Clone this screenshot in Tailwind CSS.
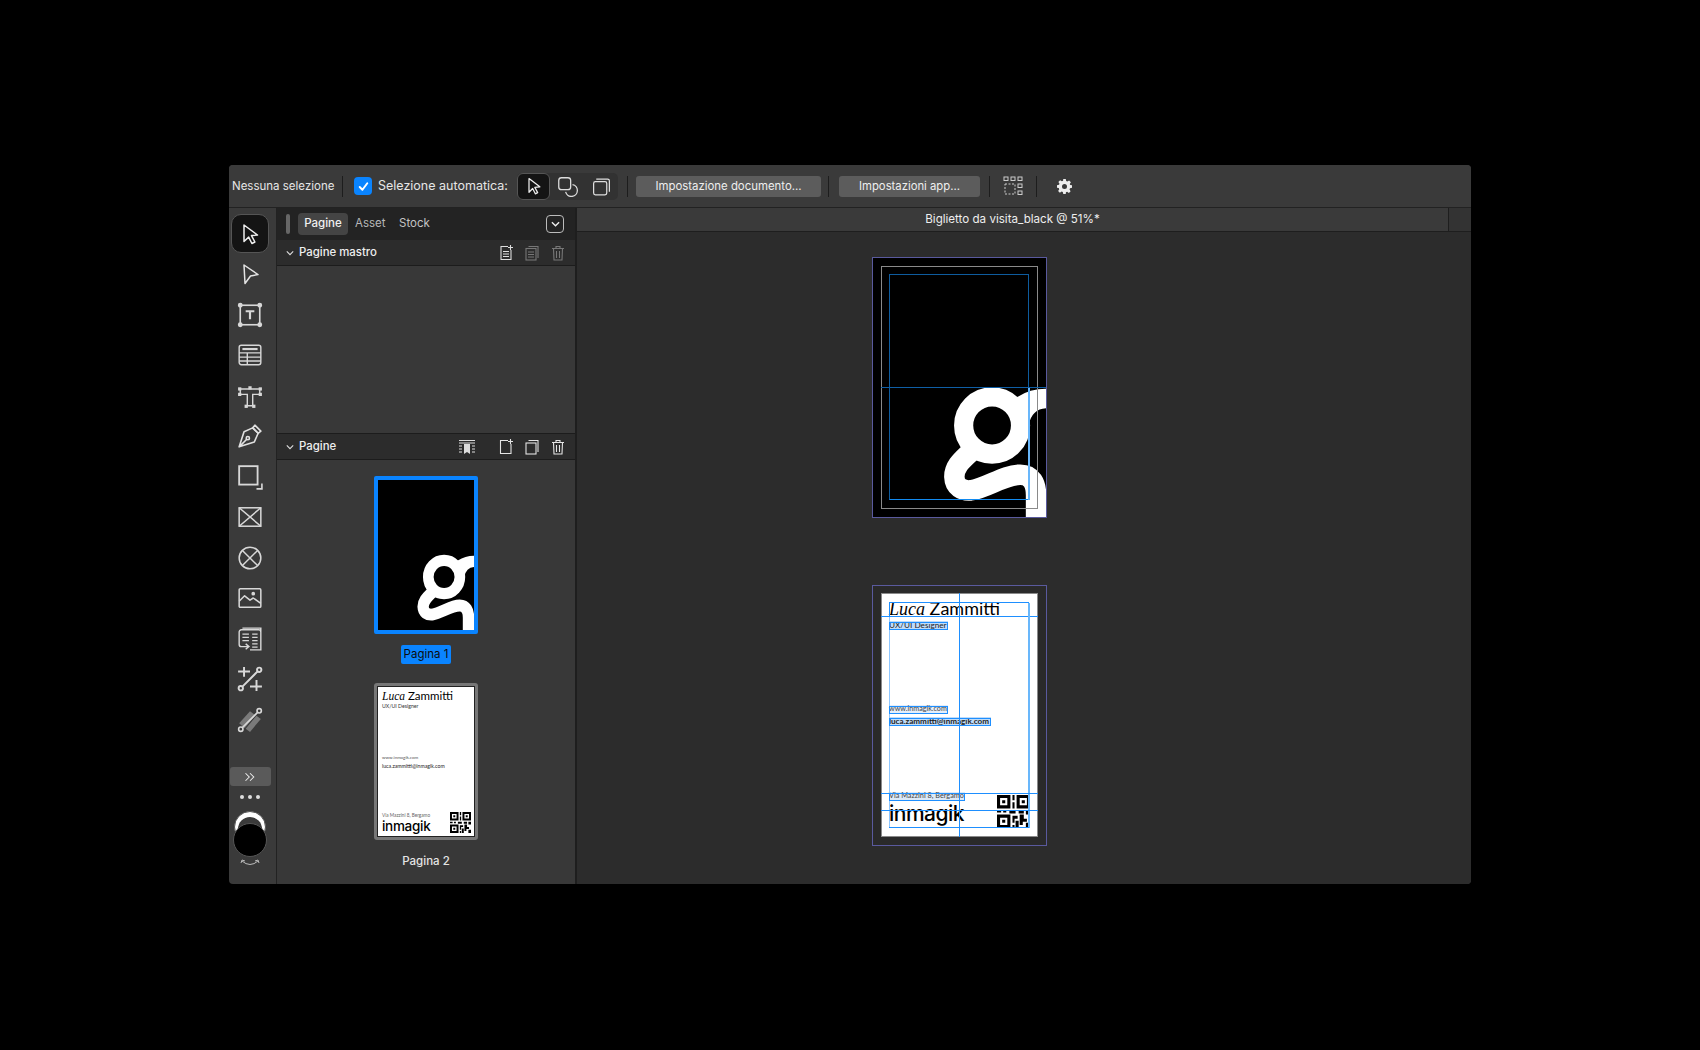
<!DOCTYPE html>
<html lang="it">
<head>
<meta charset="UTF-8">
<title>Biglietto da visita_black</title>
<script src="https://cdn.jsdelivr.net/npm/@tailwindcss/browser@4"></script>
</head>
<body class="bg-black w-[1700px] h-[1050px] overflow-hidden pt-[165px] pl-[229px] font-['Inter','Liberation_Sans',sans-serif] text-[#e6e6e6]">

<svg class="hidden">
  <symbol id="logo-g" viewBox="35 37 523 778" preserveAspectRatio="none">
    <circle cx="395" cy="540" r="86" fill="none" stroke="#fff" stroke-width="58"/>
    <path d="M470 455 Q510 430 558 430 V488 Q515 490 505 540 L470 560 Z" fill="#fff"/>
    <path d="M335 615 C310 640 280 660 281 695 C282 725 305 737 330 735 C380 728 430 688 480 688 C515 688 528 715 528 750 V815" fill="none" stroke="#fff" stroke-width="62"/>
  </symbol>
  <symbol id="qr" viewBox="0 0 32 32">
    <path fill="#000" fill-rule="evenodd" d="M0 0H13V13H0ZM3 3V10H10V3ZM5 5H8V8H5ZM15 0H17V5H15ZM15 7H17V13H15ZM19 0H32V13H19ZM22 3V10H29V3ZM24 5H27V8H24ZM0 15H4V17H0ZM6 15H9V17H6ZM12 15H18V18H12ZM21 15H26V18H21ZM28 15H32V19H28ZM0 19H13V32H0ZM3 22V29H10V22ZM5 24H8V27H5ZM15 20H20V23H17V27H15ZM22 19H26V23H29V26H25V29H22ZM18 25H21V32H18ZM28 27H32V32H28ZM15 29H17V32H15Z"/>
  </symbol>
</svg>

<div class="w-[1242px] h-[719px] rounded-[4px] overflow-hidden bg-[#3a3a3a] flex flex-col">

  <!-- toolbar -->
  <div class="h-[43px] shrink-0 flex items-center bg-[#3a3a3a] border-b border-[#222]">
    <span class="ml-[3px] w-[108px] pt-[1px] text-[11.500px] whitespace-nowrap">Nessuna selezione</span>
    <div class="ml-[2px] w-px h-[21px] bg-[#1d1d1d]"></div>
    <div class="ml-[11px] w-[18px] h-[18px] rounded-[4px] bg-[#0a84ff] flex items-center justify-center">
      <svg viewBox="0 0 12 12" class="w-[13px] h-[13px]" fill="none" stroke="#fff" stroke-width="1.800" stroke-linecap="round" stroke-linejoin="round"><path d="M2.500 6.500 5 9l4.500-6"/></svg>
    </div>
    <span class="ml-[6px] w-[133px] text-[12.500px] whitespace-nowrap">Selezione automatica:</span>
    <div class="ml-[6px] w-[101px] h-[27px] rounded-[5px] bg-[#323232] flex items-center">
      <div class="w-[33px] h-[27px] rounded-[6px] bg-[#141414] border border-[#555] flex items-center justify-center">
        <svg viewBox="0 0 24 24" class="w-[20px] h-[20px]" fill="none" stroke="#eee" stroke-width="1.500" stroke-linejoin="round"><path d="M6 3 19 13l-6 .6 3.400 6.400-2.800 1.400-3.200-6.400L6 19.500Z"/></svg>
      </div>
      <svg viewBox="0 0 24 24" class="ml-[6px] w-[22px] h-[22px]" fill="none" stroke="#ddd" stroke-width="1.400"><rect x="3" y="3" width="13" height="13" rx="3"/><path d="M18 10.500a6.500 6.500 0 1 1-7.500 8"/></svg>
      <svg viewBox="0 0 24 24" class="ml-[13px] w-[21px] h-[21px]" fill="none" stroke="#ddd" stroke-width="1.400"><rect x="3" y="6.500" width="15" height="15" rx="2"/><path d="M6 3.500h13a2 2 0 0 1 2 2V18"/></svg>
    </div>
    <div class="ml-[9px] w-px h-[21px] bg-[#1d1d1d]"></div>
    <div class="ml-[8px] w-[185px] h-[21px] pt-[1px] rounded-[3px] bg-[#5c5c5c] flex items-center justify-center text-[11.400px] text-[#eee]">Impostazione documento...</div>
    <div class="ml-[7px] w-px h-[21px] bg-[#1d1d1d]"></div>
    <div class="ml-[10px] w-[141px] h-[21px] rounded-[3px] bg-[#5c5c5c] flex items-center justify-center text-[11.300px] text-[#eee]">Impostazioni app...</div>
    <div class="ml-[9px] w-px h-[21px] bg-[#1d1d1d]"></div>
    <svg viewBox="0 0 20 20" class="ml-[13px] w-[20px] h-[20px]" fill="none" stroke="#ccc" stroke-width="1"><rect x="1" y="1" width="4" height="3.500"/><rect x="8" y="1" width="4" height="3.500"/><rect x="15" y="1" width="4" height="3.500"/><rect x="15" y="8" width="4" height="3.500"/><rect x="15" y="15" width="4" height="3.500"/><rect x="2" y="8" width="10" height="10" stroke-dasharray="2 1.500"/></svg>
    <div class="ml-[13px] w-px h-[21px] bg-[#1d1d1d]"></div>
    <svg viewBox="0 0 24 24" class="ml-[20px] w-[15px] h-[15px]" fill="#eee"><path fill-rule="evenodd" d="M10 0h4l.7 3.200 1.900.8 2.800-1.800 2.800 2.800-1.800 2.800.8 1.900L24 10v4l-3.200.7-.8 1.900 1.800 2.800-2.800 2.800-2.800-1.800-1.900.8L14 24h-4l-.7-3.200-1.900-.8-2.800 1.800-2.800-2.800 1.800-2.800-.8-1.900L0 14v-4l3.200-.7.8-1.900L2.200 4.600 5 1.800 7.800 3.600l1.900-.8ZM12 8a4 4 0 1 0 0 8 4 4 0 0 0 0-8Z"/></svg>
  </div>

  <div class="flex-1 flex min-h-0">

    <!-- tools column -->
    <div class="w-[48px] shrink-0 flex flex-col items-center border-r border-[#222] pt-[6px] pr-[5px]">
      <div class="w-[38px] h-[39px] shrink-0 rounded-[10px] bg-[#141414] border border-[#555] flex items-center justify-center">
        <svg viewBox="0 0 24 24" class="w-[24px] h-[24px]" fill="none" stroke="#eee" stroke-width="1.500" stroke-linejoin="round"><path d="M6 3 19.500 13l-6 .6 3.400 6.400-3 1.500-3.200-6.400L6 19.500Z"/></svg>
      </div>
      <div class="mt-[1px] h-[40.500px] flex items-center justify-center">
        <svg viewBox="0 0 24 24" class="w-[24px] h-[24px]" fill="none" stroke="#e4e4e4" stroke-width="1.500" stroke-linejoin="round"><path d="M6 3 20 12.500l-7.500 1.500L7 21.500Z"/></svg>
      </div>
      <div class="h-[40.500px] flex items-center justify-center">
        <svg viewBox="0 0 24 24" class="w-[26px] h-[26px]" fill="none" stroke="#d8d8d8" stroke-width="1.500"><rect x="3" y="3" width="18" height="18"/><circle cx="3" cy="3" r="1.500" fill="#d8d8d8"/><circle cx="21" cy="3" r="1.500" fill="#d8d8d8"/><circle cx="3" cy="21" r="1.500" fill="#d8d8d8"/><circle cx="21" cy="21" r="1.500" fill="#d8d8d8"/><path d="M8 8.500h8M12 8.500V16" stroke-width="2"/></svg>
      </div>
      <div class="h-[40.500px] flex items-center justify-center">
        <svg viewBox="0 0 24 24" class="w-[26px] h-[26px]" fill="none" stroke="#d8d8d8" stroke-width="1.300"><rect x="2" y="3" width="20" height="18" rx="2"/><path d="M5 6.500h14" stroke-width="2"/><path d="M2 10h20M2 14h20M2 17.500h20M9.500 10v11"/></svg>
      </div>
      <div class="h-[40.500px] flex items-center justify-center">
        <svg viewBox="0 0 24 24" class="w-[26px] h-[26px]" fill="none" stroke="#d8d8d8" stroke-width="1.300"><path d="M3 5.500h18v5h-6.500V21h-5V10.500H3Z"/><g fill="#d8d8d8" stroke="none"><rect x="1" y="4" width="3" height="3"/><rect x="10.500" y="3" width="3" height="3"/><rect x="20" y="4" width="3" height="3"/><rect x="1" y="9" width="3" height="3"/><rect x="20" y="9" width="3" height="3"/><rect x="7" y="20" width="3" height="3"/><rect x="14" y="20" width="3" height="3"/></g></svg>
      </div>
      <div class="h-[40.500px] flex items-center justify-center">
        <svg viewBox="0 0 24 24" class="w-[26px] h-[26px]" fill="none" stroke="#e0e0e0" stroke-width="1.500" stroke-linejoin="round"><path d="M14.500 4.500 6.500 8 2 22l14-4.500 3.500-8ZM2 22l7-7"/><circle cx="10" cy="14" r="1.500"/><path d="m16.500 2 5.500 5.500-2.500 2-5-5Z"/></svg>
      </div>
      <div class="h-[40.500px] flex items-center justify-center">
        <svg viewBox="0 0 24 24" class="w-[26px] h-[26px]" fill="none" stroke="#d8d8d8"><rect x="2" y="2" width="17" height="17" stroke-width="1.700"/><path d="M23 18v5h-5" stroke-width="1.500"/></svg>
      </div>
      <div class="h-[40.500px] flex items-center justify-center">
        <svg viewBox="0 0 24 24" class="w-[26px] h-[26px]" fill="none" stroke="#d8d8d8" stroke-width="1.400"><rect x="2" y="3.500" width="20" height="17"/><path d="m2 3.500 20 17M22 3.500l-20 17"/></svg>
      </div>
      <div class="h-[40.500px] flex items-center justify-center">
        <svg viewBox="0 0 24 24" class="w-[26px] h-[26px]" fill="none" stroke="#d8d8d8" stroke-width="1.400"><circle cx="12" cy="12" r="10"/><path d="m5 5 14 14M19 5 5 19"/></svg>
      </div>
      <div class="h-[40.500px] flex items-center justify-center">
        <svg viewBox="0 0 24 24" class="w-[26px] h-[26px]" fill="none" stroke="#d8d8d8" stroke-width="1.400" stroke-linejoin="round"><rect x="2" y="3.500" width="20" height="17" rx="1"/><path d="m2 15 5-5 5 4 3-2 7 5"/><circle cx="15" cy="8" r="1" fill="#d8d8d8"/></svg>
      </div>
      <div class="h-[40.500px] flex items-center justify-center">
        <svg viewBox="0 0 24 24" class="w-[26px] h-[26px]" fill="none" stroke="#d8d8d8" stroke-width="1.300"><path d="M5 2h17v3M2 17V5.500a2 2 0 0 1 2-2h16a2 2 0 0 1 2 2V22H12M2 17a2 2 0 0 0 2 2h7M8 16.500l3 2.500-3 2.500"/><path d="M5 7.500h6M5 10.500h6M5 13.500h6M14 7.500h5M14 10.500h5M14 13.500h5M14 16.500h5M14 19.500h5"/></svg>
      </div>
      <div class="h-[40.500px] flex items-center justify-center">
        <svg viewBox="0 0 24 24" class="w-[26px] h-[26px]" fill="none" stroke="#d8d8d8" stroke-width="1.800"><path d="M1 5h11M6.500 1v9M12 19h11M18 13v10M5 19 19 5"/><circle cx="3.500" cy="20.500" r="2"/><circle cx="20.500" cy="3.500" r="2"/></svg>
      </div>
      <div class="h-[40.500px] flex items-center justify-center">
        <svg viewBox="0 0 24 24" class="w-[26px] h-[26px]" fill="none" stroke="#d8d8d8" stroke-width="1.500"><path d="M2 15 12 4l5 3.500-10 12Z" fill="#7a7a7a" stroke="none"/><path d="M8 20 18 8l4 3-10 12Z" fill="#7a7a7a" stroke="none"/><path d="M4.500 19.500 19.500 4.500"/><circle cx="3.500" cy="20.500" r="2"/><circle cx="20.500" cy="3.500" r="2"/></svg>
      </div>
      <div class="mt-[27px] w-[41px] h-[19px] shrink-0 rounded-[3px] bg-[#5a5a5a] flex items-center justify-center">
        <svg viewBox="0 0 16 12" class="w-[12px] h-[10px]" fill="none" stroke="#eee" stroke-width="1.400"><path d="m2 1 5 5-5 5M8 1l5 5-5 5"/></svg>
      </div>
      <div class="mt-[9px] flex gap-[4px]">
        <div class="w-[4px] h-[4px] rounded-full bg-[#ddd]"></div>
        <div class="w-[4px] h-[4px] rounded-full bg-[#ddd]"></div>
        <div class="w-[4px] h-[4px] rounded-full bg-[#ddd]"></div>
      </div>
      <div class="relative mt-[12px] w-[34px] h-[48px]">
        <div class="absolute left-[1px] top-0 w-[32px] h-[32px] rounded-full bg-white border border-[#555]"></div>
        <div class="absolute left-[5px] top-[6px] w-[24px] h-[24px] rounded-full bg-[#3a3a3a]"></div>
        <div class="absolute left-0 top-[12px] w-[34px] h-[34px] rounded-full bg-black border border-[#555]"></div>
      </div>
      <svg viewBox="0 0 20 8" class="w-[20px] h-[8px]" fill="none" stroke="#bbb" stroke-width="1"><path d="M2 2q8 7 16 0M1 4l1-3 3 1M19 4l-1-3-3 1"/></svg>
    </div>

    <!-- pages panel -->
    <div class="w-[300px] shrink-0 flex flex-col border-r-2 border-[#1e1e1e] bg-[#383838]">
      <div class="h-[32px] shrink-0 flex items-center bg-[#232323]">
        <div class="ml-[9px] w-[4px] h-[20px] rounded-[2px] bg-[#666]"></div>
        <div class="ml-[8px] w-[50px] h-[22px] rounded-[4px] bg-[#444] flex items-center justify-center text-[11.500px] font-medium text-[#f0f0f0]">Pagine</div>
        <span class="ml-[7px] w-[44px] text-[11.500px] text-[#b8b8b8]">Asset</span>
        <span class="text-[11.500px] text-[#c4c4c4]">Stock</span>
        <div class="ml-auto mr-[11px] w-[18px] h-[18px] rounded-[4px] border border-[#bbb] flex items-center justify-center">
          <svg viewBox="0 0 10 6" class="w-[9px] h-[6px]" fill="none" stroke="#eee" stroke-width="1.500"><path d="m1 1 4 4 4-4"/></svg>
        </div>
      </div>

      <div class="h-[26px] shrink-0 flex items-center bg-[#2c2c2c] border-b border-[#1c1c1c]">
        <svg viewBox="0 0 10 6" class="ml-[9px] w-[8px] h-[6px]" fill="none" stroke="#ddd" stroke-width="1.400"><path d="m1 1 4 4 4-4"/></svg>
        <span class="ml-[5px] pt-[1px] text-[11.400px] font-medium text-[#eee]">Pagine mastro</span>
        <div class="ml-auto mr-[9px] flex gap-[10px]">
          <svg viewBox="0 0 16 16" class="w-[16px] h-[16px]" fill="none" stroke="#ddd" stroke-width="1.100"><path d="M10 1.500H3v13h10V5M12.500 0v5M10 2.500h5M5 6.500h6M5 9h6M5 11.500h6"/></svg>
          <svg viewBox="0 0 16 16" class="w-[16px] h-[16px]" fill="none" stroke="#777" stroke-width="1.100"><rect x="2" y="3.500" width="10" height="11.500"/><path d="M4.500 1.500h9.500V13M4 7h6M4 9.500h6M4 12h6"/></svg>
          <svg viewBox="0 0 16 16" class="w-[16px] h-[16px]" fill="none" stroke="#777" stroke-width="1.100"><path d="M2 3.500h12M6 3.500V1.500h4v2M3.500 3.500l.5 11.500h8l.5-11.500M6.500 6v7M9.500 6v7"/></svg>
        </div>
      </div>

      <div class="h-[167px] shrink-0"></div>

      <div class="h-[27px] shrink-0 flex items-center bg-[#2c2c2c] border-y border-[#1c1c1c]">
        <svg viewBox="0 0 10 6" class="ml-[9px] w-[8px] h-[6px]" fill="none" stroke="#ddd" stroke-width="1.400"><path d="m1 1 4 4 4-4"/></svg>
        <span class="ml-[5px] pt-[1px] text-[11.400px] font-medium text-[#eee]">Pagine</span>
        <svg viewBox="0 0 18 16" class="ml-auto w-[18px] h-[16px]" fill="none" stroke="#ddd" stroke-width="1"><path d="M1 1.500h16M1 4h16M1 7h3M14 7h3M1 10h3M14 10h3M1 13h3M14 13h3"/><path d="M6 5h6v10l-3-2-3 2Z" fill="#ddd" stroke="none"/></svg>
        <div class="ml-[22px] mr-[9px] flex gap-[10px]">
          <svg viewBox="0 0 16 16" class="w-[16px] h-[16px]" fill="none" stroke="#e4e4e4" stroke-width="1.100"><path d="M10 1.500H2.500v13H13V5M12.500 0v5M10 2.500h5"/></svg>
          <svg viewBox="0 0 16 16" class="w-[16px] h-[16px]" fill="none" stroke="#e4e4e4" stroke-width="1.100"><rect x="2" y="4" width="10" height="11"/><path d="M4.500 1.500h9.500V13"/></svg>
          <svg viewBox="0 0 16 16" class="w-[16px] h-[16px]" fill="none" stroke="#e4e4e4" stroke-width="1.100"><path d="M2 3.500h12M6 3.500V1.500h4v2M3.500 3.500l.5 11.500h8l.5-11.500M6.500 6v7M9.500 6v7"/></svg>
        </div>
      </div>

      <!-- thumbnails -->
      <div class="flex-1 flex flex-col items-center">
        <div class="mt-[16px] w-[104px] h-[158px] bg-black border-[4px] border-[#0a84ff] rounded-[2px] shrink-0">
          <svg class="w-full h-full"><use href="#logo-g"/></svg>
        </div>
        <div class="mt-[11px] w-[50px] h-[19px] bg-[#0a84ff] rounded-[2px] flex items-center justify-center text-[11.500px] text-[#0c0c0c] whitespace-nowrap">Pagina 1</div>
        <div class="mt-[19px] w-[104px] h-[157px] bg-white border-[3px] border-[#777] rounded-[3px] shrink-0 flex flex-col font-['Lato',sans-serif] text-black pl-[5px] pt-[3px] shadow-[inset_0_0_0_1px_#222]">
          <div class="h-[14px] leading-[14px] text-[11.500px] whitespace-nowrap"><span class="font-['Liberation_Serif',serif] italic">Luca</span> Zammitti</div>
          <div class="h-[6px] leading-[6px] text-[5.200px] text-[#333] whitespace-nowrap">UX/UI Designer</div>
          <div class="mt-[46px] h-[6px] leading-[6px] text-[4.500px] text-[#555] whitespace-nowrap">www.inmagik.com</div>
          <div class="mt-[2px] h-[6px] leading-[6px] text-[5.200px] text-[#222] whitespace-nowrap">luca.zammitti@inmagik.com</div>
          <div class="mt-auto mb-[4px] flex items-end justify-between">
            <div class="flex flex-col">
              <span class="leading-[6px] text-[4.700px] text-[#666] whitespace-nowrap">Via Mazzini 8, Bergamo</span>
              <span class="mt-[1px] leading-[14px] text-[13.500px] font-['Inter',sans-serif] font-medium tracking-[-0.300px] whitespace-nowrap">inmagik</span>
            </div>
            <svg class="w-[21px] h-[21px] mr-[4px]"><use href="#qr"/></svg>
          </div>
        </div>
        <div class="mt-[13px] text-[11.500px] font-medium text-[#e4e4e4]">Pagina 2</div>
      </div>
    </div>

    <!-- canvas -->
    <div class="flex-1 flex flex-col bg-[#2c2c2c] min-w-0">
      <div class="h-[24px] shrink-0 flex bg-[#3a3a3a] border-b border-[#1e1e1e]">
        <div class="w-[872px] flex items-center justify-center text-[11.600px] text-[#eee] border-r border-[#1e1e1e]">Biglietto da visita_black @ 51%*</div>
        <div class="flex-1 bg-[#333]"></div>
      </div>
      <div class="relative flex-1">

        <!-- page 1 spread -->
        <div class="absolute left-[295px] top-[25px] w-[175px] h-[261px] bg-black border border-[#5a5a9e] overflow-hidden">
          <svg class="absolute inset-0 w-full h-full"><use href="#logo-g"/></svg>
          <div class="absolute left-[8px] top-[8px] w-[157px] h-[243px] border border-[#8a8a8a]"></div>
          <div class="absolute left-[16px] top-[16px] w-[140px] h-[226px] border border-[#0e5c9e] border-b-[#128aef]"></div>
          <div class="absolute left-[8px] top-[129px] w-[165px] h-px bg-[#0f5fa6]"></div>
          <div class="absolute left-[155px] top-[130px] w-[2px] h-[112px] bg-[#69b7fb]"></div>
        </div>

        <!-- page 2 spread -->
        <div class="absolute left-[295px] top-[353px] w-[175px] h-[261px] bg-[#2a2a2a] border border-[#5a5a9e] overflow-hidden">
          <div class="absolute left-[8px] top-[7px] w-[157px] h-[244px] bg-white border border-[#8a8a8a] font-['Lato',sans-serif] text-black">
            <div class="absolute left-[7px] top-[4px] leading-[20px] text-[18px] whitespace-nowrap"><span class="font-['Liberation_Serif',serif] italic">Luca</span> Zammitti</div>
            <div class="absolute left-[7px] top-[27px] w-[59px] h-[8px] bg-[#bfdcfa] leading-[8px] text-[8.200px] text-[#222] whitespace-nowrap">UX/UI Designer</div>
            <div class="absolute left-[7px] top-[111px] w-[59px] h-[8px] bg-[#e4eefa] leading-[8px] text-[7.200px] text-[#444] whitespace-nowrap">www.inmagik.com</div>
            <div class="absolute left-[7px] top-[123px] w-[102px] h-[8px] bg-[#bfdcfa] leading-[8px] text-[8.100px] font-bold text-[#222] whitespace-nowrap">luca.zammitti@inmagik.com</div>
            <div class="absolute left-[7px] top-[198px] w-[76px] h-[8px] bg-[#dbe9f8] leading-[8px] text-[7.300px] text-[#444] whitespace-nowrap">Via Mazzini 8, Bergamo</div>
            <div class="absolute left-[7px] top-[208px] leading-[24px] text-[21px] font-['Inter',sans-serif] font-medium tracking-[-0.500px] whitespace-nowrap">inmagik</div>
            <svg class="absolute left-[115px] top-[201px] w-[33px] h-[33px]"><use href="#qr"/></svg>
          </div>
          <!-- guides -->
          <div class="absolute left-[16px] top-[16px] w-[140px] h-[15px] border border-[#1e8fff] border-b-0"></div>
          <div class="absolute left-[8px] top-[30px] w-[157px] h-px bg-[#1e8fff]"></div>
          <div class="absolute left-[16px] top-[31px] w-px h-[211px] bg-[#8fc7ff]"></div>
          <div class="absolute left-[155px] top-[17px] w-[2px] h-[225px] bg-[#69b7fb]"></div>
          <div class="absolute left-[86px] top-[7px] w-px h-[244px] bg-[#1e8fff]"></div>
          <div class="absolute left-[16px] top-[36px] w-[59px] h-[8px] border border-[#1e8fff]"></div>
          <div class="absolute left-[16px] top-[120px] w-[59px] h-[8px] border border-[#1e8fff]"></div>
          <div class="absolute left-[16px] top-[132px] w-[102px] h-[8px] border border-[#1e8fff]"></div>
          <div class="absolute left-[8px] top-[207px] w-[157px] h-px bg-[#1e8fff]"></div>
          <div class="absolute left-[8px] top-[224px] w-[157px] h-px bg-[#1e8fff]"></div>
          <div class="absolute left-[16px] top-[241px] w-[140px] h-px bg-[#1e8fff]"></div>
          <div class="absolute left-[16px] top-[207px] w-[76px] h-[8px] border border-[#1e8fff]"></div>
        </div>
      </div>
    </div>
  </div>
</div>
</body>
</html>
